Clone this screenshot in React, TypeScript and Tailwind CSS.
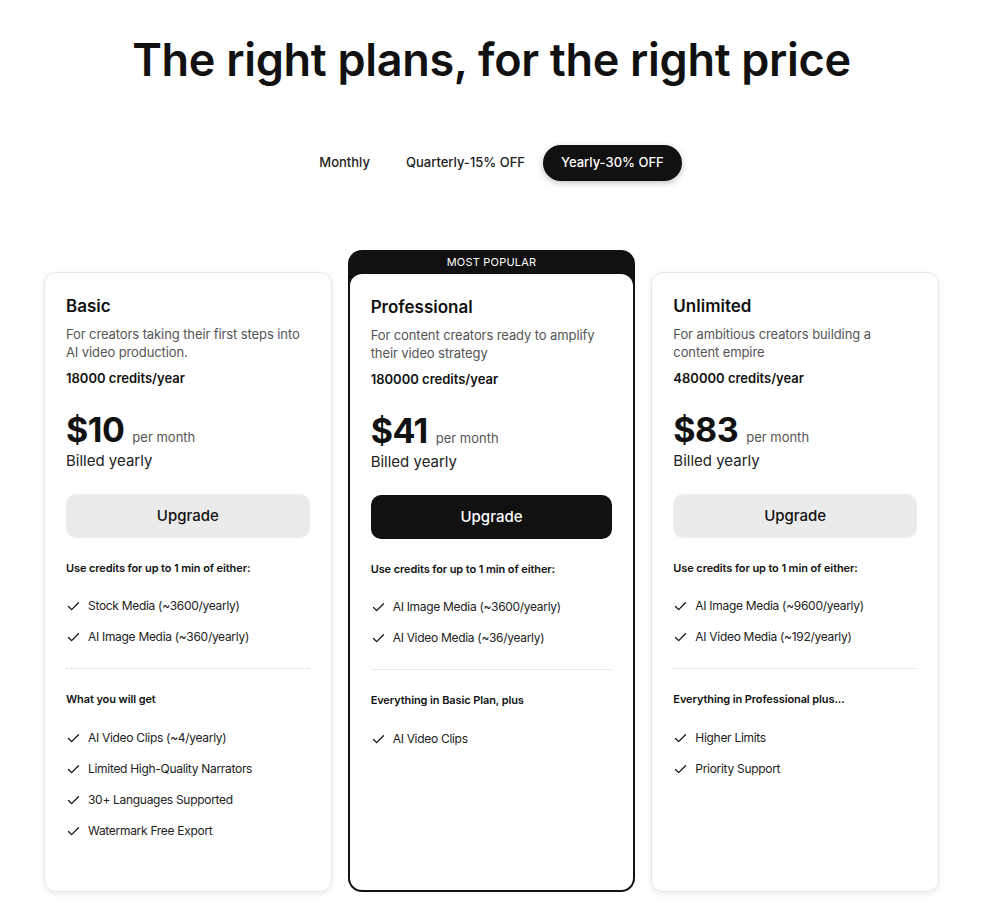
import { Check } from "lucide-react";

type Plan = {
  name: string;
  desc: string;
  credits: string;
  price: string;
  media: string[];
  extraTitle: string;
  extras: string[];
  popular?: boolean;
};

const PLANS: Plan[] = [
  {
    name: "Basic",
    desc: "For creators taking their first steps into AI video production.",
    credits: "18000 credits/year",
    price: "$10",
    media: ["Stock Media (~3600/yearly)", "AI Image Media (~360/yearly)"],
    extraTitle: "What you will get",
    extras: [
      "AI Video Clips (~4/yearly)",
      "Limited High-Quality Narrators",
      "30+ Languages Supported",
      "Watermark Free Export",
    ],
  },
  {
    name: "Professional",
    desc: "For content creators ready to amplify their video strategy",
    credits: "180000 credits/year",
    price: "$41",
    media: ["AI Image Media (~3600/yearly)", "AI Video Media (~36/yearly)"],
    extraTitle: "Everything in Basic Plan, plus",
    extras: ["AI Video Clips"],
    popular: true,
  },
  {
    name: "Unlimited",
    desc: "For ambitious creators building a content empire",
    credits: "480000 credits/year",
    price: "$83",
    media: ["AI Image Media (~9600/yearly)", "AI Video Media (~192/yearly)"],
    extraTitle: "Everything in Professional plus...",
    extras: ["Higher Limits", "Priority Support"],
  },
];

function Item({ text }: { text: string }) {
  return (
    <li className="flex items-center gap-[7px] h-[20px] text-[12px] tracking-[-0.3px] text-[#222]">
      <Check size={15} strokeWidth={2} className="text-[#111]" />
      <span>{text}</span>
    </li>
  );
}

function PlanBody({ plan }: { plan: Plan }) {
  return (
    <div className="px-[21px] pt-[21px]">
      <div className="text-[17px] leading-[24px] font-semibold text-[#111]">{plan.name}</div>
      <p className="mt-[7px] text-[13px] leading-[18px] tracking-[-0.1px] text-[#555]">{plan.desc}</p>
      <div className="mt-[8px] text-[13px] leading-[18px] font-semibold text-[#111]">{plan.credits}</div>
      <div className="mt-[23px] flex items-baseline gap-[8px] h-[40px]">
        <span className="text-[34px] leading-[40px] font-bold tracking-[-0.5px] text-[#111]">{plan.price}</span>
        <span className="text-[13px] text-[#555]">per month</span>
      </div>
      <div className="text-[15px] leading-[22px] text-[#222]">Billed yearly</div>
      <button
        className={`mt-[22px] w-full h-[44px] rounded-[10px] text-[15px] font-medium ${
          plan.popular ? "bg-[#111] text-white" : "bg-[#ebebeb] text-[#111]"
        }`}
      >
        Upgrade
      </button>
      <div className="mt-[22px] text-[11px] leading-[16px] font-semibold tracking-[-0.1px] text-[#111]">
        Use credits for up to 1 min of either:
      </div>
      <ul className="mt-[20px] flex flex-col gap-[11px]">
        {plan.media.map((m) => (
          <Item key={m} text={m} />
        ))}
      </ul>
      <div className="mt-[21px] border-t border-dotted border-[#d4d4d4]" />
      <div className="mt-[22px] text-[11px] leading-[16px] font-semibold tracking-[-0.1px] text-[#111]">
        {plan.extraTitle}
      </div>
      <ul className="mt-[21px] flex flex-col gap-[11px]">
        {plan.extras.map((m) => (
          <Item key={m} text={m} />
        ))}
      </ul>
    </div>
  );
}

export default function App() {
  return (
    <div className="min-h-screen bg-white font-['Inter',sans-serif] text-[#111]">
      <h1 className="pt-[30px] text-center text-[45px] leading-[60px] font-semibold tracking-[-0.3px]">
        The right plans, for the right price
      </h1>

      <div className="mt-[55px] flex justify-center items-center text-[13px] font-medium">
        <button className="h-[36px] px-[18px] rounded-full text-[#222]">Monthly</button>
        <button className="h-[36px] px-[18px] rounded-full text-[#222]">Quarterly-15% OFF</button>
        <button className="h-[36px] px-[18px] rounded-full bg-[#111] text-white shadow-[0_2px_6px_rgba(0,0,0,0.25)]">
          Yearly-30% OFF
        </button>
      </div>

      <div className="mt-[69px] mx-[44px] grid grid-cols-3 gap-[16px] h-[642px]">
        {PLANS.map((plan) =>
          plan.popular ? (
            <div key={plan.name} className="flex flex-col rounded-[14px] bg-[#111] px-[2px] pb-[2px]">
              <div className="h-[24px] flex items-center justify-center text-[11px] tracking-[0.2px] text-white">
                MOST POPULAR
              </div>
              <div className="flex-1 rounded-[12px] bg-white">
                <PlanBody plan={plan} />
              </div>
            </div>
          ) : (
            <div
              key={plan.name}
              className="mt-[22px] rounded-[12px] border border-[#e8e8e8] bg-white shadow-[0_2px_6px_rgba(0,0,0,0.08)]"
            >
              <PlanBody plan={plan} />
            </div>
          )
        )}
      </div>
    </div>
  );
}
